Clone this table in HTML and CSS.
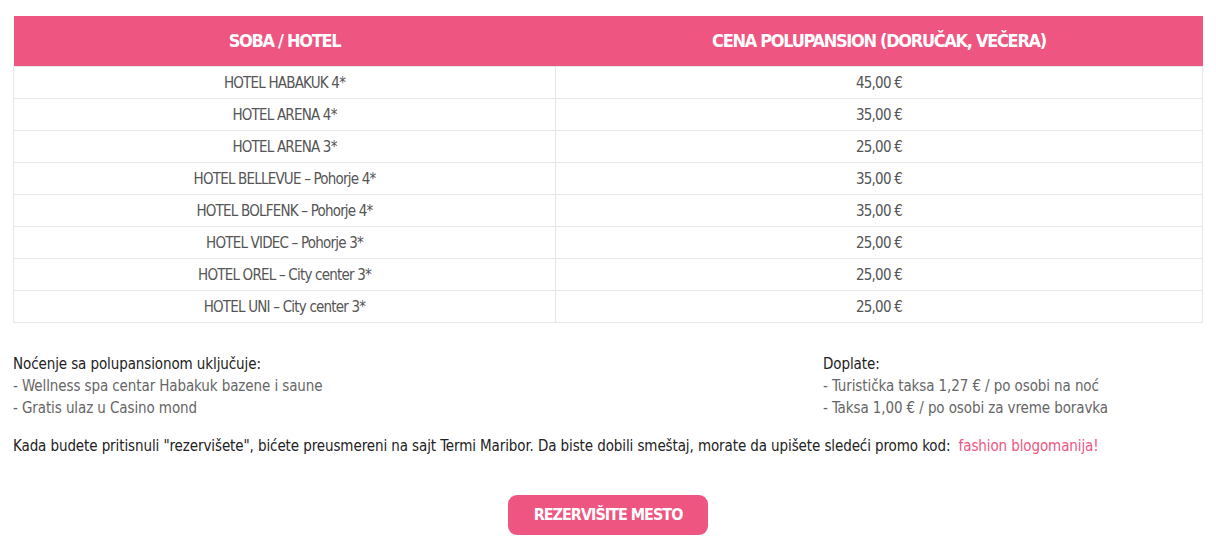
FILE: index.html
```html
<!DOCTYPE html>
<html lang="sr">
<head>
<meta charset="utf-8">
<title>Hoteli</title>
<link rel="stylesheet" href="styles.css">
</head>
<body>
<div class="page">
  <table class="prices">
    <thead>
      <tr><th class="col-hotel">SOBA / HOTEL</th><th>CENA POLUPANSION (DORUČAK, VEČERA)</th></tr>
    </thead>
    <tbody>
      <tr><td>HOTEL HABAKUK 4*</td><td>45,00 €</td></tr>
      <tr><td>HOTEL ARENA 4*</td><td>35,00 €</td></tr>
      <tr><td>HOTEL ARENA 3*</td><td>25,00 €</td></tr>
      <tr><td>HOTEL BELLEVUE – Pohorje 4*</td><td>35,00 €</td></tr>
      <tr><td>HOTEL BOLFENK – Pohorje 4*</td><td>35,00 €</td></tr>
      <tr><td>HOTEL VIDEC – Pohorje 3*</td><td>25,00 €</td></tr>
      <tr><td>HOTEL OREL – City center 3*</td><td>25,00 €</td></tr>
      <tr><td>HOTEL UNI – City center 3*</td><td>25,00 €</td></tr>
    </tbody>
  </table>

  <div class="info">
    <div class="info-left">
      <p class="info-title">Noćenje sa polupansionom uključuje:</p>
      <p class="info-item">- Wellness spa centar Habakuk bazene i saune</p>
      <p class="info-item">- Gratis ulaz u Casino mond</p>
    </div>
    <div class="info-right">
      <p class="info-title">Doplate:</p>
      <p class="info-item">- Turistička taksa 1,27 € / po osobi na noć</p>
      <p class="info-item">- Taksa 1,00 € / po osobi za vreme boravka</p>
    </div>
  </div>

  <p class="note">Kada budete pritisnuli "rezervišete", bićete preusmereni na sajt Termi Maribor. Da biste dobili smeštaj, morate da upišete sledeći promo kod: <span class="promo">fashion blogomanija!</span></p>

  <div class="actions">
    <a class="btn" href="#">REZERVIŠITE MESTO</a>
  </div>
</div>
</body>
</html>
```

FILE: styles.css
```css
* { box-sizing: border-box; }
html, body { margin: 0; padding: 0; background: #fff; }
body {
  font-family: "DejaVu Sans Condensed", "DejaVu Sans", sans-serif;
  color: #444;
}
.page {
  padding: 16px 13px 20px 13px;
}
.prices {
  width: 1190px;
  border-collapse: collapse;
  table-layout: fixed;
}
.prices th {
  background: #ef5581;
  color: #fff;
  font-weight: bold;
  font-size: 18px;
  letter-spacing: -1.3px;
  height: 50px;
  padding: 0;
  text-align: center;
}
.prices th.col-hotel { width: 542px; }
.prices td {
  height: 32px;
  padding: 1px 0 0 0;
  text-align: center;
  font-size: 15px;
  letter-spacing: -0.8px;
  color: #555;
  border: 1px solid #e6e6e6;
}
.info {
  display: flex;
  margin-top: 30px;
}
.info-left { width: 810px; }
.info-right { flex: 1; }
.info p {
  margin: 0;
  line-height: 22px;
  font-size: 15px;
  letter-spacing: -0.1px;
}
.info-title { color: #222; }
.info-item { color: #666; }
.note {
  margin: 16px 0 0 0;
  font-size: 15px;
  letter-spacing: -0.1px;
  line-height: 22px;
  color: #222;
}
.promo { color: #ef5581; margin-left: 4px; }
.actions {
  display: flex;
  justify-content: center;
  margin-top: 38px;
}
.btn {
  display: flex;
  align-items: center;
  justify-content: center;
  width: 200px;
  height: 40px;
  border-radius: 9px;
  background: #ef5581;
  color: #fff;
  font-weight: bold;
  font-size: 16px;
  letter-spacing: -1px;
  white-space: nowrap;
  text-decoration: none;
}
```
